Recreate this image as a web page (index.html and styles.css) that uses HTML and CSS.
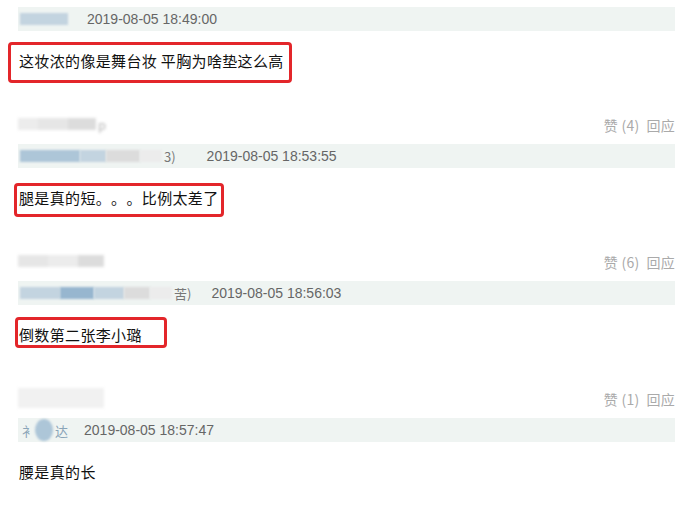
FILE: index.html
```html
<!DOCTYPE html>
<html lang="zh">
<head>
<meta charset="UTF-8">
<meta name="viewport" content="width=device-width, initial-scale=1.0"/>
<title>评论</title>
<link rel="stylesheet" href="styles.css">
</head>
<body>
<div class="list">
    <div class="comment">
        <div class="head">
            <span class="user"><i class="px g1"></i><i class="px g2"></i></span>
            <span class="ops">赞 (2)&nbsp;&nbsp;回应</span>
        </div>
        <div class="quote">
            <span class="name"><i class="px b1 w48"></i></span>
            <span class="time">2019-08-05 18:49:00</span>
        </div>
        <div class="content">
            这妆浓的像是舞台妆 平胸为啥垫这么高
            <span class="mark mark-1"></span>
        </div>
    </div>

    <div class="comment">
        <div class="head">
            <span class="user"><i class="px g3 w20"></i><i class="px g1 w30"></i><i class="px g2 w28"></i><span class="tail">p</span></span>
            <span class="ops">赞 (4)&nbsp;&nbsp;回应</span>
        </div>
        <div class="quote">
            <span class="name wide-2"><i class="px b2 w60"></i><i class="px b1 w26"></i><i class="px g2 w34"></i><i class="px g3 w22"></i><span class="tail">3)</span></span>
            <span class="time">2019-08-05 18:53:55</span>
        </div>
        <div class="content">
            腿是真的短。。。比例太差了
            <span class="mark mark-2"></span>
        </div>
    </div>

    <div class="comment">
        <div class="head">
            <span class="user"><i class="px g1 w30"></i><i class="px g3 w30"></i><i class="px g2 w26"></i></span>
            <span class="ops">赞 (6)&nbsp;&nbsp;回应</span>
        </div>
        <div class="quote">
            <span class="name wide-3"><i class="px b1 w40"></i><i class="px b3 w34"></i><i class="px b1 w30"></i><i class="px g2 w26"></i><i class="px g3 w22"></i><span class="tail">苦)</span></span>
            <span class="time">2019-08-05 18:56:03</span>
        </div>
        <div class="content">
            倒数第二张李小璐
            <span class="mark mark-3"></span>
        </div>
    </div>

    <div class="comment">
        <div class="head">
            <span class="user"><i class="px g4 w86"></i></span>
            <span class="ops">赞 (1)&nbsp;&nbsp;回应</span>
        </div>
        <div class="quote">
            <span class="name wide-4"><span class="tail">衤</span><i class="px b2 w18 round"></i><span class="tail">达</span></span>
            <span class="time">2019-08-05 18:57:47</span>
        </div>
        <div class="content">
            腰是真的长
        </div>
    </div>
</div>
</body>
</html>
```

FILE: styles.css
```css
* { margin:0; padding:0; box-sizing:border-box; }
body {
    background: #fff;
    font-family: "Liberation Sans", Arial, "Noto Sans CJK SC", sans-serif;
    overflow: hidden;
    height: 100vh;
}
.list {
    width: 675px;
    margin-top: -26px;
}
.comment {
    height: 137px;
    padding-left: 18px;
}
.head {
    height: 26px;
    display: flex;
    justify-content: space-between;
    align-items: center;
}
.user {
    display: flex;
    align-items: center;
    height: 18px;
    filter: blur(1.5px);
}
.ops {
    font-family: "Noto Sans CJK SC", sans-serif;
    font-size: 14px;
    color: #aaa;
    letter-spacing: 0.3px;
    white-space: nowrap;
    padding-top: 2px;
}
.quote {
    margin-top: 7px;
    height: 24px;
    background: #eff4f2;
    display: flex;
    align-items: center;
    padding-left: 2px;
}
.name {
    display: flex;
    align-items: center;
    height: 14px;
    margin-right: 19px;
}
.name .px { filter: blur(1px); }
.wide-2 { margin-right: 31px; }
.wide-3 { margin-right: 20px; }
.wide-4 { margin-right: 16px; }
.tail {
    font-family: "Noto Sans CJK SC", sans-serif;
    font-size: 13px;
    color: #8aa4b8;
    margin-left: 2px;
}
.user .tail { color: #b5b5b5; }
.wide-3 .tail, .wide-2 .tail { color: #777; }
.time {
    font-size: 14px;
    color: #666;
}
.px {
    display: block;
    height: 12px;
    width: 24px;
}
.g1 { background: #e6e6e6; }
.g2 { background: #dcdcdc; }
.g3 { background: #ececec; }
.g4 { background: #f1f1f1; height: 20px; }
.b1 { background: #c3d4e0; }
.b2 { background: #adc6d8; }
.b3 { background: #97b6cf; }
.w18 { width: 18px; height: 22px; }
.w20 { width: 20px; }
.w22 { width: 22px; }
.w26 { width: 26px; }
.w28 { width: 28px; }
.w30 { width: 30px; }
.w34 { width: 34px; }
.w40 { width: 40px; }
.w48 { width: 48px; }
.w60 { width: 60px; }
.w86 { width: 86px; }
.round { border-radius: 50%; }
.content {
    position: relative;
    margin-top: 20px;
    margin-left: 1px;
    height: 20px;
    line-height: 20px;
    font-family: "Noto Sans CJK TC", "Noto Sans CJK SC", sans-serif;
    font-size: 15px;
    letter-spacing: 0.35px;
    text-spacing-trim: space-all;
    color: #111;
}
.mark {
    position: absolute;
    border: 3px solid #e3262a;
    border-radius: 4px;
}
.mark-1 { left: -11px; top: -9px; width: 284px; height: 41px; }
.mark-2 { left: -5px; top: -5px; width: 210px; height: 34px; }
.mark-3 { left: -4px; top: -8px; width: 152px; height: 31px; }
```
